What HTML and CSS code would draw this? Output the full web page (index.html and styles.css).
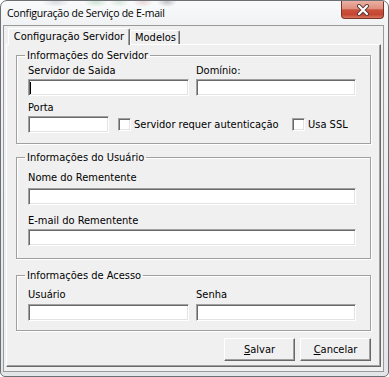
FILE: index.html
```html
<!DOCTYPE html>
<html lang="pt">
<head>
<meta charset="utf-8">
<title>Configuração de Serviço de E-mail</title>
<link rel="stylesheet" href="styles.css">
</head>
<body>
<div class="window">
  <div class="titlebar">
    <span class="title">Configuração de Serviço de E-mail</span>
    <div class="close">
      <svg width="14" height="12" viewBox="0 0 14 12">
        <path d="M3 2 L11 10 M11 2 L3 10" stroke="#5a3a36" stroke-width="4" stroke-linecap="round"/>
        <path d="M3 2 L11 10 M11 2 L3 10" stroke="#ffffff" stroke-width="2.2" stroke-linecap="round"/>
      </svg>
    </div>
  </div>
  <div class="client">
    <div class="tabs">
      <div class="tab active">Configuração Servidor</div>
      <div class="tab">Modelos</div>
    </div>
    <div class="panel">
      <fieldset class="group g1">
        <legend>Informações do Servidor</legend>
        <div class="cols">
          <div class="field"><span class="lbl">Servidor de Saida</span><div class="input"><span class="caret"></span></div></div>
          <div class="field"><span class="lbl">Domínio:</span><div class="input"></div></div>
        </div>
        <div class="porta-row">
          <div class="field porta"><span class="lbl">Porta</span><div class="input"></div></div>
          <div class="check auth"><span class="box"></span><span>Servidor requer autenticação</span></div>
          <div class="check"><span class="box"></span><span>Usa SSL</span></div>
        </div>
      </fieldset>
      <fieldset class="group g2">
        <legend>Informações do Usuário</legend>
        <div class="field first"><span class="lbl">Nome do Rementente</span><div class="input"></div></div>
        <div class="field second"><span class="lbl">E-mail do Rementente</span><div class="input"></div></div>
      </fieldset>
      <fieldset class="group g3">
        <legend>Informações de Acesso</legend>
        <div class="cols">
          <div class="field"><span class="lbl">Usuário</span><div class="input"></div></div>
          <div class="field"><span class="lbl">Senha</span><div class="input"></div></div>
        </div>
      </fieldset>
      <div class="buttons">
        <div class="btn"><u>S</u>alvar</div>
        <div class="btn"><u>C</u>ancelar</div>
      </div>
    </div>
  </div>
</div>
</body>
</html>
```
FILE: styles.css
```css
* { box-sizing: border-box; }
body {
  margin: 0;
  background: #ffffff;
  font-family: "DejaVu Sans Condensed", "DejaVu Sans", sans-serif;
  font-size: 11px;
  color: #000;
}
.window {
  width: 389px;
  height: 377px;
  border: 1px solid #6c7075;
  border-radius: 7px 7px 5px 5px;
  background: linear-gradient(180deg, #f9fafb 0, #f0f2f4 24px, #e3e6e9 100%);
  display: flex;
  flex-direction: column;
  overflow: hidden;
}
.titlebar {
  height: 24px;
  flex: none;
  display: flex;
  align-items: flex-start;
  padding-left: 6px;
  background:
    radial-gradient(ellipse 14px 5px at 55px 1px, rgba(120,130,140,0.25), transparent),
    radial-gradient(ellipse 12px 5px at 95px 1px, rgba(80,160,90,0.25), transparent),
    radial-gradient(ellipse 10px 5px at 118px 1px, rgba(80,160,90,0.2), transparent),
    radial-gradient(ellipse 10px 5px at 142px 1px, rgba(190,90,90,0.22), transparent),
    radial-gradient(ellipse 10px 5px at 166px 1px, rgba(60,70,90,0.3), transparent);
}
.title {
  font-family: "Open Sans", "Noto Sans", sans-serif;
  font-size: 10.5px;
  letter-spacing: -0.25px;
  line-height: 25px;
  color: #000;
}
.close {
  margin-left: auto;
  margin-right: 4px;
  width: 43px;
  height: 18px;
  border: 1px solid #7b3328;
  border-top: none;
  border-radius: 0 0 4px 4px;
  background: linear-gradient(180deg, #eab1a4 0%, #df8f7e 45%, #c9523d 52%, #c54531 80%, #d8765e 100%);
  display: flex;
  align-items: center;
  justify-content: center;
}
.client {
  flex: 1;
  margin: 0 4px 4px 2px;
  border: 1px solid #9a9a9a;
  background: #f0f0f0;
  padding: 2px 2px 4px 2px;
  display: flex;
  flex-direction: column;
}
.tabs {
  height: 16px;
  flex: none;
  display: flex;
  align-items: flex-start;
  padding-left: 2px;
  position: relative;
  z-index: 1;
}
.tab {
  height: 14px;
  margin-top: 2px;
  border-top: 1px solid #ffffff;
  border-left: 1px solid #ffffff;
  border-right: 1px solid #696969;
  box-shadow: inset -1px 0 0 #a0a0a0;
  border-radius: 2px 2px 0 0;
  background: #f0f0f0;
  padding: 0 4px;
  line-height: 13px;
  width: 50px;
  text-align: center;
}
.tab.active {
  width: 122px;
  height: 17px;
  margin-top: 0;
  line-height: 15px;
  padding: 0 3px;
}
.panel {
  flex: 1;
  border-top: 1px solid #ffffff;
  border-left: 1px solid #ffffff;
  border-right: 1px solid #696969;
  border-bottom: 1px solid #696969;
  box-shadow: inset -1px -1px 0 #a0a0a0;
  padding: 4px 9px 0 9px;
  display: flex;
  flex-direction: column;
}
.group {
  margin: 0;
  min-width: 0;
  border: 1px solid #a0a0a0;
  box-shadow: inset 1px 1px 0 #ffffff, 1px 1px 0 #ffffff;
  padding: 0 14px 0 11px;
}
.group legend {
  padding: 0 2px;
  margin-left: -3px;
  line-height: 13px;
}
.g1 { padding-top: 2px; padding-bottom: 10px; }
.g2 { margin-top: 7px; padding-top: 7px; padding-bottom: 12px; }
.g3 { margin-top: 10px; padding-top: 6px; padding-bottom: 9px; }
.cols {
  display: grid;
  grid-template-columns: 161px 160px;
  column-gap: 7px;
}
.field {
  display: flex;
  flex-direction: column;
  gap: 2px;
}
.g2 .field.first { gap: 4px; }
.g2 .field.second { gap: 2px; margin-top: 9px; }
.g3 .field { gap: 3px; }
.lbl { line-height: 13px; white-space: nowrap; }
.input {
  height: 17px;
  background: #ffffff;
  border: 1px solid;
  border-color: #a0a0a0 #ffffff #ffffff #a0a0a0;
  box-shadow: inset 1px 1px 0 #696969, inset -1px -1px 0 #e3e3e3;
  display: flex;
  align-items: center;
  padding-left: 1px;
}
.caret {
  width: 1px;
  height: 12px;
  background: #000;
}
.porta-row {
  display: flex;
  align-items: flex-end;
  margin-top: 5px;
}
.porta { width: 81px; }
.check {
  height: 17px;
  display: flex;
  align-items: center;
  gap: 3px;
  white-space: nowrap;
}
.check.auth { width: 174px; margin-left: 9px; }
.box {
  width: 13px;
  height: 13px;
  flex: none;
  background: #ffffff;
  border: 1px solid;
  border-color: #a0a0a0 #ffffff #ffffff #a0a0a0;
  box-shadow: inset 1px 1px 0 #696969, inset -1px -1px 0 #e3e3e3;
}
.buttons {
  margin-top: 7px;
  display: flex;
  justify-content: flex-end;
  gap: 5px;
}
.btn {
  width: 71px;
  height: 23px;
  background: #f0f0f0;
  border: 1px solid;
  border-color: #ffffff #696969 #696969 #ffffff;
  box-shadow: inset -1px -1px 0 #a0a0a0;
  display: flex;
  align-items: center;
  justify-content: center;
}
```
